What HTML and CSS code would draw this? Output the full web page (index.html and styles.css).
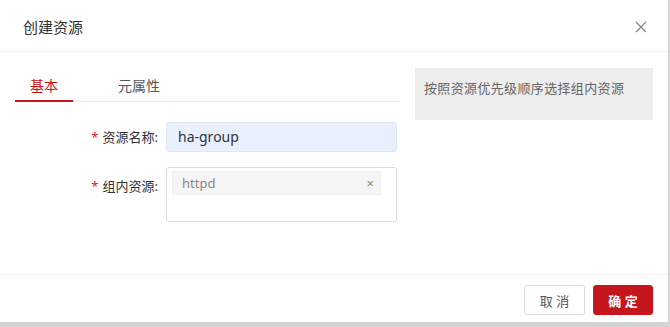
FILE: index.html
```html
<!DOCTYPE html>
<html lang="zh-CN">
<head>
  <meta charset="UTF-8" />
  <title>创建资源</title>
  <link rel="stylesheet" href="styles.css">
</head>
<body>
  <div class="dialog">
    <div class="dialog-header">
      <span class="dialog-title">创建资源</span>
      <svg class="close" width="12" height="12" viewBox="0 0 12 12">
        <path d="M1 1L11 11M11 1L1 11" stroke="#8c8c8c" stroke-width="1.4" fill="none" />
      </svg>
    </div>

    <div class="dialog-body">
      <div class="main">
        <div class="tabs">
          <div class="tab active">基本</div>
          <div class="tab">元属性</div>
        </div>

        <div class="form">
          <div class="row">
            <label class="label"><span class="req">*</span>资源名称:</label>
            <div class="input filled">ha-group</div>
          </div>
          <div class="row">
            <label class="label label-tall"><span class="req">*</span>组内资源:</label>
            <div class="tag-box">
              <div class="tag">
                <span>httpd</span>
                <span class="tag-x">×</span>
              </div>
            </div>
          </div>
        </div>
      </div>

      <div class="hint">按照资源优先级顺序选择组内资源</div>
    </div>

    <div class="dialog-footer">
      <button class="btn">取 消</button>
      <button class="btn btn-primary">确 定</button>
    </div>
  </div>
</body>
</html>
```

FILE: styles.css
```css
body {
  margin: 0;
  background: #d3d5d9;
  font-family: "Noto Sans", "Noto Sans CJK SC", sans-serif;
  color: #333;
}
.dialog {
  width: 668px;
  height: 322px;
  background: #fff;
  display: flex;
  flex-direction: column;
}
.dialog-header {
  height: 51px;
  border-bottom: 1px solid #f0f0f0;
  padding: 0 21px 0 23px;
  display: flex;
  align-items: center;
  justify-content: space-between;
}
.dialog-title {
  font-size: 15px;
  color: #333;
  margin-top: 2px;
}
.close {
  margin-top: 2px;
}
.dialog-body {
  flex: 1;
  display: flex;
  padding: 16px 0 0 15px;
}
.main {
  width: 385px;
}
.tabs {
  display: flex;
  margin-top: 2px;
  border-bottom: 1px solid #ebebeb;
}
.tab {
  font-size: 14px;
  line-height: 28px;
  padding: 2px 15px 0;
  border-bottom: 2px solid transparent;
  margin-bottom: -1px;
  color: #555;
}
.tab + .tab {
  margin-left: 30px;
}
.tab.active {
  color: #c4161c;
  border-bottom-color: #c4161c;
}
.form {
  margin-top: 20px;
}
.row {
  display: flex;
  align-items: flex-start;
  margin-bottom: 15px;
}
.label {
  width: 143px;
  margin-right: 8px;
  text-align: right;
  font-size: 13px;
  line-height: 30px;
  color: #333;
}
.label-tall {
  line-height: 38px;
}
.req {
  color: #e0161e;
  margin-right: 4px;
}
.input {
  width: 231px;
  height: 30px;
  box-sizing: border-box;
  border: 1px solid #dcdcdc;
  border-radius: 3px;
  padding: 0 11px;
  font-size: 14px;
  line-height: 28px;
}
.input.filled {
  background: #e8f0fe;
  border-color: #e1e7f0;
  color: #333;
}
.tag-box {
  width: 231px;
  height: 55px;
  box-sizing: border-box;
  border: 1px solid #dcdcdc;
  border-radius: 3px;
  padding: 3px 15px 0 5px;
}
.tag {
  height: 22px;
  background: #f5f5f5;
  border: 1px solid #f0f0f0;
  border-radius: 2px;
  display: flex;
  align-items: center;
  justify-content: space-between;
  padding: 0 6px 0 9px;
  font-size: 13px;
  color: #888;
}
.tag-x {
  font-size: 13px;
  color: #888;
}
.hint {
  width: 238px;
  height: 52px;
  box-sizing: border-box;
  margin-left: 15px;
  background: #ededed;
  padding: 10px 9px 0;
  font-size: 13px;
  line-height: 20px;
  letter-spacing: 0.35px;
  color: #666;
}
.dialog-footer {
  height: 48px;
  border-top: 1px solid #f0f0f0;
  display: flex;
  justify-content: flex-end;
  align-items: flex-start;
  gap: 8px;
  padding: 10px 15px 0 0;
  box-sizing: border-box;
}
.btn {
  width: 61px;
  height: 30px;
  border: 1px solid #dcdcdc;
  border-radius: 3px;
  background: #fff;
  color: #555;
  font-family: inherit;
  font-size: 13px;
  cursor: pointer;
}
.btn-primary {
  width: 60px;
  background: #c4161c;
  border-color: #c4161c;
  color: #fff;
  font-weight: bold;
}
```
